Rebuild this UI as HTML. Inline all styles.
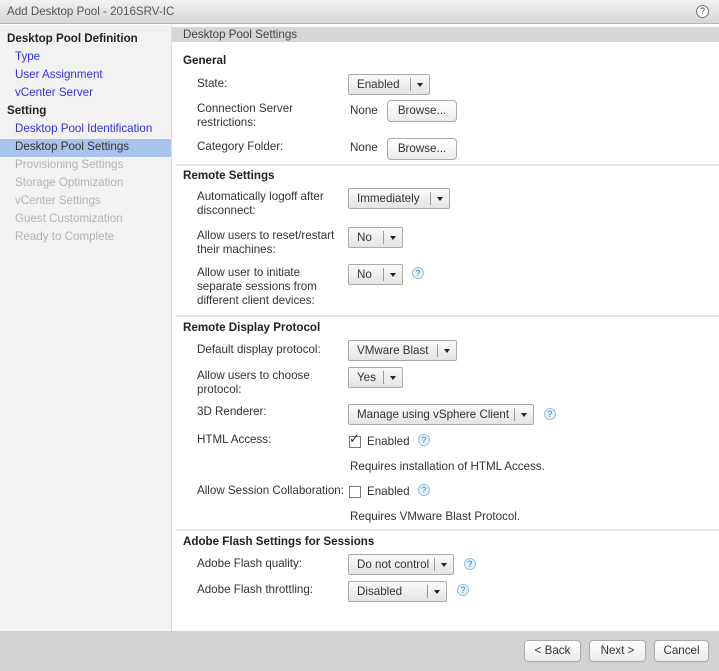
<!DOCTYPE html>
<html><head><style>
*{margin:0;padding:0;box-sizing:border-box}
body{width:719px;height:671px;position:relative;overflow:hidden;background:#fff;font-family:"Liberation Sans",sans-serif;font-size:11.6px;color:#333}
.a{position:absolute;white-space:nowrap;line-height:14px}
.b{font-weight:bold;color:#222}
.l{color:#3333dd}
.g{color:#b4b4b4}
.dd{position:absolute;height:21px;border:1px solid #aaa;background:linear-gradient(#fafafa,#e4e4e4);border-radius:2px;font-size:11.6px;line-height:19px;padding-left:8px;color:#333}
.dd i{position:absolute;right:0;top:3px;width:19px;height:13px;border-left:1px solid #999}
.dd i:after{content:"";position:absolute;left:6px;top:5px;border:3.5px solid transparent;border-top:4px solid #222}
.btn{position:absolute;height:22px;border:1px solid #aaa;border-radius:4px;background:linear-gradient(#fff,#ececec);text-align:center;line-height:20px;color:#333}
.q{position:absolute;width:12px;height:12px;border-radius:50%;border:1px solid #8cc4e0;background:#e8f4fb;color:#5aa6d0;font-size:9px;line-height:10px;text-align:center;font-weight:bold}
.sep{position:absolute;left:176px;right:0;height:2px;background:#e4e4e4}
.cb{position:absolute;width:12px;height:12px;border:1px solid #777;background:#fff}
</style></head><body>
<div style="position:absolute;left:0;top:0;width:719px;height:24px;background:linear-gradient(#f2f2f2,#d6d6d6);border-bottom:1px solid #b8b8b8"></div>
<div class="a" style="left:7px;top:5px;color:#555">Add Desktop Pool - 2016SRV-IC</div>
<div style="position:absolute;left:696px;top:5px;width:13px;height:13px;border-radius:50%;border:1px solid #777;background:#fff;font-size:9px;text-align:center;line-height:11px;color:#444">?</div>
<div style="position:absolute;left:0;top:25px;width:172px;height:606px;background:#f2f2f2;border-right:1px solid #ddd"></div>
<div style="position:absolute;left:0;top:139px;width:171px;height:18px;background:#a8c4ea"></div>
<div class="a b" style="left:7px;top:32px">Desktop Pool Definition</div>
<div class="a l" style="left:15px;top:50px">Type</div>
<div class="a l" style="left:15px;top:68px">User Assignment</div>
<div class="a l" style="left:15px;top:86px">vCenter Server</div>
<div class="a b" style="left:7px;top:104px">Setting</div>
<div class="a l" style="left:15px;top:122px">Desktop Pool Identification</div>
<div class="a" style="left:15px;top:140px;color:#333">Desktop Pool Settings</div>
<div class="a g" style="left:15px;top:158px">Provisioning Settings</div>
<div class="a g" style="left:15px;top:176px">Storage Optimization</div>
<div class="a g" style="left:15px;top:194px">vCenter Settings</div>
<div class="a g" style="left:15px;top:212px">Guest Customization</div>
<div class="a g" style="left:15px;top:230px">Ready to Complete</div>
<div style="position:absolute;left:172px;top:27px;width:547px;height:15px;background:#d6d6d6"></div>
<div class="a" style="left:183px;top:28px;color:#444">Desktop Pool Settings</div>

<div class="a b" style="left:183px;top:54px">General</div>
<div class="a" style="left:197px;top:77px">State:</div>
<div class="dd" style="left:348px;top:74px;width:82px">Enabled<i></i></div>
<div class="a" style="left:197px;top:102px">Connection Server<br>restrictions:</div>
<div class="a" style="left:350px;top:104px">None</div>
<div class="btn" style="left:387px;top:100px;width:70px">Browse...</div>
<div class="a" style="left:197px;top:140px">Category Folder:</div>
<div class="a" style="left:350px;top:141px">None</div>
<div class="btn" style="left:387px;top:138px;width:70px">Browse...</div>
<div class="sep" style="top:164px"></div>

<div class="a b" style="left:183px;top:169px">Remote Settings</div>
<div class="a" style="left:197px;top:190px">Automatically logoff after<br>disconnect:</div>
<div class="dd" style="left:348px;top:188px;width:102px">Immediately<i></i></div>
<div class="a" style="left:197px;top:229px">Allow users to reset/restart<br>their machines:</div>
<div class="dd" style="left:348px;top:227px;width:55px">No<i></i></div>
<div class="a" style="left:197px;top:266px">Allow user to initiate<br>separate sessions from<br>different client devices:</div>
<div class="dd" style="left:348px;top:264px;width:55px">No<i></i></div>
<div class="q" style="left:412px;top:267px">?</div>
<div class="sep" style="top:315px"></div>

<div class="a b" style="left:183px;top:321px">Remote Display Protocol</div>
<div class="a" style="left:197px;top:343px">Default display protocol:</div>
<div class="dd" style="left:348px;top:340px;width:109px">VMware Blast<i></i></div>
<div class="a" style="left:197px;top:369px">Allow users to choose<br>protocol:</div>
<div class="dd" style="left:348px;top:367px;width:55px">Yes<i></i></div>
<div class="a" style="left:197px;top:405px">3D Renderer:</div>
<div class="dd" style="left:348px;top:404px;width:186px">Manage using vSphere Client<i></i></div>
<div class="q" style="left:544px;top:408px">?</div>
<div class="a" style="left:197px;top:433px">HTML Access:</div>
<div class="cb" style="left:349px;top:436px"></div>
<div class="a" style="left:349px;top:432px;font-size:13px;color:#222">✓</div>
<div class="a" style="left:367px;top:435px">Enabled</div>
<div class="q" style="left:418px;top:434px">?</div>
<div class="a" style="left:350px;top:460px">Requires installation of HTML Access.</div>
<div class="a" style="left:197px;top:484px">Allow Session Collaboration:</div>
<div class="cb" style="left:349px;top:486px"></div>
<div class="a" style="left:367px;top:485px">Enabled</div>
<div class="q" style="left:418px;top:484px">?</div>
<div class="a" style="left:350px;top:510px">Requires VMware Blast Protocol.</div>
<div class="sep" style="top:529px"></div>

<div class="a b" style="left:183px;top:535px">Adobe Flash Settings for Sessions</div>
<div class="a" style="left:197px;top:557px">Adobe Flash quality:</div>
<div class="dd" style="left:348px;top:554px;width:106px">Do not control<i></i></div>
<div class="q" style="left:464px;top:558px">?</div>
<div class="a" style="left:197px;top:583px">Adobe Flash throttling:</div>
<div class="dd" style="left:348px;top:581px;width:99px">Disabled<i></i></div>
<div class="q" style="left:457px;top:584px">?</div>

<div style="position:absolute;left:0;top:631px;width:719px;height:40px;background:#d2d2d2"></div>
<div class="btn" style="left:524px;top:640px;width:57px">&lt; Back</div>
<div class="btn" style="left:589px;top:640px;width:57px">Next &gt;</div>
<div class="btn" style="left:654px;top:640px;width:55px">Cancel</div>
</body></html>
